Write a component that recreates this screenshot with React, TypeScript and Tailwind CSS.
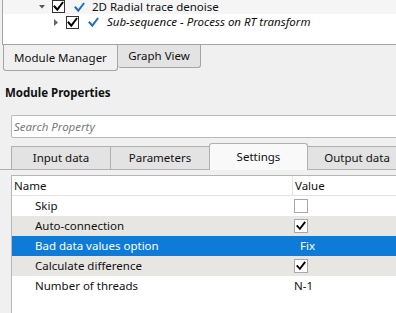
import React from "react";

const Check = ({ color = "#000", size = 11, w = 2 }: { color?: string; size?: number; w?: number }) => (
  <svg width={size} height={size} viewBox="0 0 11 11">
    <path d="M1.5 5.5 L4.3 8.6 L9.5 1.8" fill="none" stroke={color} strokeWidth={w} strokeLinecap="square" />
  </svg>
);

const TreeBox = () => (
  <div className="w-[13px] h-[13px] border border-[#333] bg-white flex items-center justify-center">
    <Check />
  </div>
);

const TableBox = ({ checked }: { checked: boolean }) => (
  <div className="w-[14px] h-[14px] border border-[#a8a8a8] bg-white flex items-center justify-center">
    {checked && <Check size={10} />}
  </div>
);

export default function App() {
  const rows: { label: string; kind: "box" | "text"; checked?: boolean; text?: string; bg: string; sel?: boolean; vx?: string }[] = [
    { label: "Skip", kind: "box", checked: false, bg: "bg-white" },
    { label: "Auto-connection", kind: "box", checked: true, bg: "bg-[#e8e6e2]" },
    { label: "Bad data values option", kind: "text", text: "Fix", bg: "bg-[#0f7bd8]", sel: true, vx: "pl-[6px]" },
    { label: "Calculate difference", kind: "box", checked: true, bg: "bg-[#e8e6e2]" },
    { label: "Number of threads", kind: "text", text: "N-1", bg: "bg-white", vx: "pl-[0px]" },
  ];
  return (
    <div className="w-[396px] h-[313px] bg-[#f0f0f0] overflow-hidden font-['Noto_Sans',sans-serif] text-[11.5px] text-[#111] leading-none">
      {/* tree panel */}
      <div className="ml-[2px] h-[45px] bg-white border-l border-b border-[#a5a5a5] flex flex-col">
        <div className="h-[14px] bg-[#f5f5f5] flex items-center">
          <div className="w-[36px] shrink-0" />
          <svg width="6" height="4" viewBox="0 0 6 4"><path d="M0 0 H6 L3 3.5 Z" fill="#555" /></svg>
          <div className="w-[7px] shrink-0" />
          <div className="-mt-[1px]"><TreeBox /></div>
          <div className="w-[9px] shrink-0" />
          <Check color="#1b6ec6" size={11} />
          <div className="w-[7px] shrink-0" />
          <span className="whitespace-nowrap">2D Radial trace denoise</span>
        </div>
        <div className="h-[16px] flex items-center">
          <div className="w-[51px] shrink-0" />
          <svg width="4" height="7" viewBox="0 0 4 7"><path d="M0 0 V7 L4 3.5 Z" fill="#666" /></svg>
          <div className="w-[8px] shrink-0" />
          <TreeBox />
          <div className="w-[9px] shrink-0" />
          <Check color="#1b6ec6" size={11} />
          <div className="w-[8px] shrink-0" />
          <span className="italic whitespace-nowrap">Sub-sequence - Process on RT transform</span>
        </div>
      </div>
      {/* bottom tabs */}
      <div className="flex pl-[3px] h-[27px] items-start">
        <div className="w-[115px] shrink-0 h-[26px] border-l border-r border-b border-[#a5a5a5] rounded-b-[3px] bg-[#f0f0f0] flex items-center justify-center">
          Module Manager
        </div>
        <div className="w-[83px] shrink-0 h-[23px] border-r border-b border-[#a5a5a5] rounded-b-[3px] bg-[#e3e3e3] flex items-center justify-center">
          Graph View
        </div>
      </div>
      {/* module properties */}
      <div className="mt-[13px] pl-[5px] h-[16px] flex items-center font-bold">Module Properties</div>
      <div className="mt-[14px] ml-[11px] w-[400px] h-[23px] bg-white border border-[#b9b9b9] rounded-[2px] flex items-center pl-[2px]">
        <span className="italic text-[#7a7a7a]">Search Property</span>
      </div>
      {/* tabs */}
      <div className="mt-[6px] pl-[11px] h-[26px] flex items-end border-b border-[#b0b0b0]">
        <div className="w-[99px] shrink-0 h-[24px] -mb-px border-l border-t border-b border-[#b0b0b0] bg-[#e3e3e3] flex items-center justify-center">Input data</div>
        <div className="w-[99px] shrink-0 h-[24px] -mb-px border-l border-t border-b border-[#b0b0b0] bg-[#e3e3e3] flex items-center justify-center">Parameters</div>
        <div className="w-[99px] shrink-0 h-[27px] -mb-px border-l border-t border-r border-[#b0b0b0] rounded-t-[3px] bg-[#f9f9f9] flex items-center justify-center z-10">Settings</div>
        <div className="w-[99px] shrink-0 h-[24px] -mb-px border-t border-r border-b border-[#b0b0b0] bg-[#e3e3e3] flex items-center justify-center">Output data</div>
      </div>
      {/* table */}
      <div className="mt-[5px] ml-[11px] w-[400px] h-[200px] bg-white border-l border-t border-[#b5b5b5]">
        <div className="h-[20px] flex border-b border-[#e3e3e3] bg-white">
          <div className="w-[281px] shrink-0 pl-[2px] flex items-center border-r border-[#e3e3e3]">Name</div>
          <div className="pl-[2px] flex items-center">Value</div>
        </div>
        {rows.map((r) => (
          <div key={r.label} className={`h-[20px] flex ${r.bg} ${r.sel ? "text-white" : ""}`}>
            <div className="w-[282px] shrink-0 pl-[23px] flex items-center whitespace-nowrap">{r.label}</div>
            <div className={`flex items-center ${r.vx ?? ""}`}>
              {r.kind === "box" ? <TableBox checked={!!r.checked} /> : <span>{r.text}</span>}
            </div>
          </div>
        ))}
      </div>
    </div>
  );
}
